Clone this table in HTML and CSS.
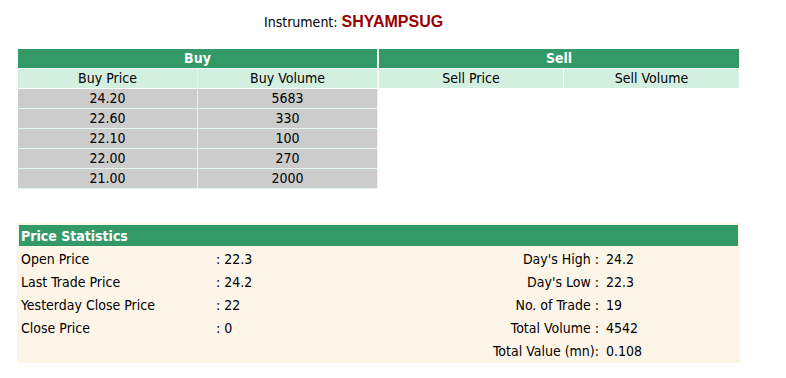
FILE: index.html
```html
<!DOCTYPE html>
<html>
<head>
<meta charset="utf-8">
<link rel="stylesheet" href="styles.css">
</head>
<body>
<div class="title">Instrument: <span class="code">SHYAMPSUG</span></div>

<div class="book">
  <table class="side buy">
    <tr><th class="head" colspan="2">Buy</th></tr>
    <tr><td class="sub c1">Buy Price</td><td class="sub c2">Buy Volume</td></tr>
    <tr><td class="c1">24.20</td><td class="c2">5683</td></tr>
    <tr><td class="c1">22.60</td><td class="c2">330</td></tr>
    <tr><td class="c1">22.10</td><td class="c2">100</td></tr>
    <tr><td class="c1">22.00</td><td class="c2">270</td></tr>
    <tr><td class="c1">21.00</td><td class="c2">2000</td></tr>
  </table>
  <table class="side sell">
    <tr><th class="head" colspan="2">Sell</th></tr>
    <tr><td class="sub s1">Sell Price</td><td class="sub s2">Sell Volume</td></tr>
  </table>
</div>

<div class="stats">
  <div class="stats-head">Price Statistics</div>
  <div class="stats-row"><span>Open Price</span><span>: 22.3</span><span class="rl">Day's High :</span><span class="rv">24.2</span></div>
  <div class="stats-row"><span>Last Trade Price</span><span>: 24.2</span><span class="rl">Day's Low :</span><span class="rv">22.3</span></div>
  <div class="stats-row"><span>Yesterday Close Price</span><span>: 22</span><span class="rl">No. of Trade :</span><span class="rv">19</span></div>
  <div class="stats-row"><span>Close Price</span><span>: 0</span><span class="rl">Total Volume :</span><span class="rv">4542</span></div>
  <div class="stats-row"><span></span><span></span><span class="rl">Total Value (mn):</span><span class="rv">0.108</span></div>
</div>
</body>
</html>
```

FILE: styles.css
```css
body {
  margin: 0;
  background: #ffffff;
  color: #000000;
  font-family: "DejaVu Sans Condensed", "DejaVu Sans", sans-serif;
  font-size: 14px;
}

.title {
  padding: 12px 0 0 264px;
  height: 20px;
  line-height: 20px;
}

.code {
  font-family: "Liberation Sans", Arial, sans-serif;
  font-weight: bold;
  font-size: 16px;
  color: #990000;
}

.book {
  display: flex;
  align-items: flex-start;
  gap: 1px;
  margin: 17px 0 0 18px;
}

.side {
  border-collapse: separate;
  border-spacing: 0;
  table-layout: fixed;
}

.side th,
.side td {
  padding: 0;
  height: 19px;
  line-height: 19px;
  text-align: center;
  white-space: nowrap;
}

.side .head {
  background: #339966;
  color: #ffffff;
  font-weight: bold;
  border-bottom: 1px solid #ffffff;
}

.buy .head {
  border-right: 1px solid #ffffff;
}

.side td {
  background: #cccccc;
  border-bottom: 1px solid #e4f7f0;
}

.side td.sub {
  background: #d3efe0;
  border-bottom: 1px solid #ffffff;
}

.c1, .c2 {
  width: 179px;
  border-right: 1px solid #e4f7f0;
}

.s1 {
  width: 184px;
  border-right: 1px solid #ffffff;
}

.s2 {
  width: 175px;
}

.stats {
  margin: 34px 0 0 17px;
  width: 719px;
  padding: 2px;
  background: #fdf5e8;
}

.stats-head {
  height: 20px;
  padding: 1px 0 0 2px;
  line-height: 20px;
  background: #339966;
  color: #ffffff;
  font-weight: bold;
}

.stats-row {
  display: grid;
  grid-template-columns: 195px 184px 200px 1fr;
  padding: 3px 0 0 2px;
  line-height: 20px;
  height: 20px;
  white-space: nowrap;
}

.rl {
  text-align: right;
  padding-right: 1px;
}

.rv {
  padding-left: 6px;
}
```
